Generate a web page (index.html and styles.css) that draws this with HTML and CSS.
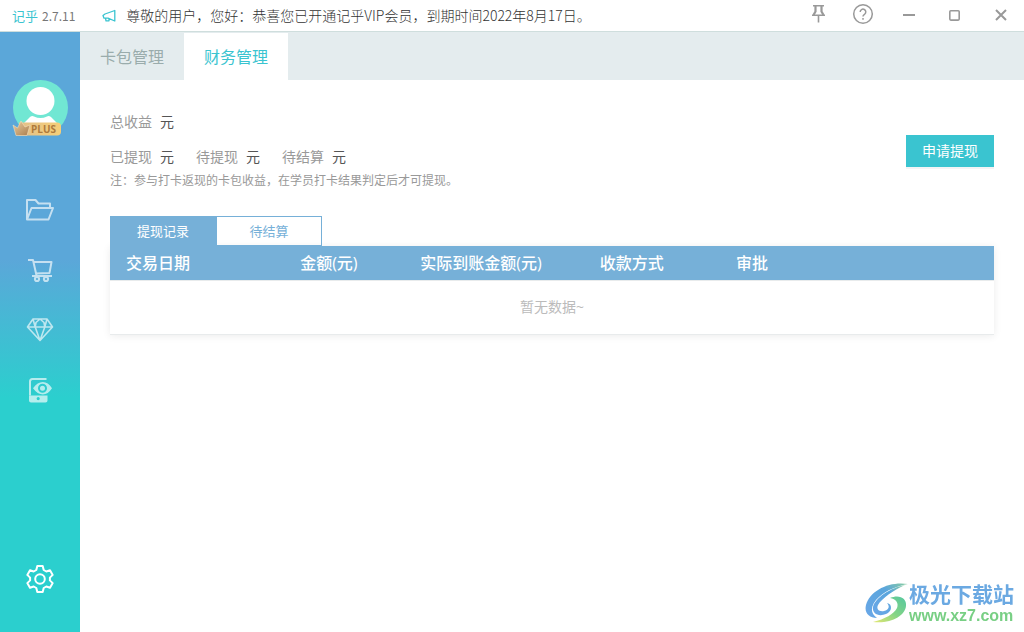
FILE: index.html
```html
<!DOCTYPE html>
<html lang="zh-CN">
<head>
<meta charset="utf-8">
<meta name="viewport" content="width=device-width, initial-scale=1">
<title>财务管理</title>
<link rel="stylesheet" href="styles.css">
</head>
<body>
<header class="titlebar">
  <span class="brand">记乎</span>
  <span class="version">2.7.11</span>
  <svg class="horn" width="14" height="14" viewBox="0 0 14 14" fill="none" stroke="#3ac4d0" stroke-width="1.3" stroke-linejoin="round"><path d="M12.800 1.500v10.500L6 9.200H2L1 6.500l2-1.500zM3.500 9.200l.5 2.600h3V9.500"/></svg>
  <p class="notice">尊敬的用户，您好：恭喜您已开通记乎VIP会员，到期时间2022年8月17日。</p>
  <div class="window-controls">
    <button type="button" aria-label="置顶"><svg width="22" height="22" viewBox="0 0 22 22" fill="none" stroke="#999" stroke-width="1.6"><path d="M7 2.800h11M6 12.200h13M12.500 13v6.500"/><path stroke-width="2.200" d="M9.500 3v5.500L7.500 12M15.500 3v5.500l2 3.500"/></svg></button>
    <button type="button" aria-label="帮助"><svg width="22" height="22" viewBox="0 0 22 22" fill="none" stroke="#999" stroke-width="1.5"><circle cx="11" cy="11" r="9.300"/><path d="M8.200 9a2.800 2.800 0 1 1 4.300 2.300Q11 12.200 11 13.600M11 15v1.700"/></svg></button>
    <button type="button" aria-label="最小化"><svg width="22" height="22" viewBox="0 0 22 22" fill="none" stroke="#999" stroke-width="2"><path d="M5 12h12"/></svg></button>
    <button type="button" aria-label="最大化"><svg width="22" height="22" viewBox="0 0 22 22" fill="none" stroke="#999" stroke-width="1.600"><rect x="5.800" y="7.700" width="9.400" height="9.400" rx="1"/></svg></button>
    <button type="button" aria-label="关闭"><svg width="22" height="22" viewBox="0 0 22 22" fill="none" stroke="#999" stroke-width="2"><path d="M6 7l10 10M16 7L6 17"/></svg></button>
  </div>
</header>
<div class="shell">
  <aside class="sidebar">
    <svg class="avatar" width="56" height="57" viewBox="0 0 56 57">
      <defs>
        <clipPath id="face"><circle cx="28.500" cy="27.500" r="27.500"/></clipPath>
        <linearGradient id="gold"><stop offset="0" stop-color="#e3c08a"/><stop offset="1" stop-color="#f6cf78"/></linearGradient>
        <linearGradient id="crown" x2="1" y2="1"><stop offset="0" stop-color="#edd0a2"/><stop offset="1" stop-color="#a97c4c"/></linearGradient>
      </defs>
      <g clip-path="url(#face)"><path fill="#71e7d3" d="M0 0h57v57H0z"/><path fill="#fff" d="M9 46l9-9q2-1.500 4-.5 6.500 3 13 0 2-1 4 .5l9 9v11H9z"/></g>
      <circle cx="28.500" cy="21" r="14" fill="#fff"/>
      <path fill="url(#gold)" d="M7 42.500h38q4 0 4 4v5q0 4-4 4H7z"/>
      <path fill="url(#crown)" stroke="#f3dfbd" stroke-width=".6" d="M4 55.500L1 45l4.500 3 3.500-7 4 6 5-2-3 10.500z"/>
      <text class="plus" x="19" y="53">PLUS</text>
    </svg>
    <nav class="nav">
      <a href="#" aria-label="文件"><svg width="30" height="30" viewBox="0 0 30 30"><path d="M2 24.500V5h8.500l3 3.500H25V13M2 24.500L6.500 13H28l-4.500 11.500z"/></svg></a>
      <a href="#" aria-label="购物车"><svg width="30" height="30" viewBox="0 0 30 30"><path d="M3 5h5l3.500 15.500M8.500 7H26.500l-2 11-14 .5M7 21h20"/><circle cx="12" cy="24" r="2.100"/><circle cx="21" cy="24" r="2.100"/></svg></a>
      <a href="#" aria-label="会员"><svg class="thin" width="30" height="30" viewBox="0 0 30 30"><path d="M8 4h14l5.500 8L15 25.500 2.500 12zM2.500 12h25M8 4l2.200 8L15 25.500 19.800 12 22 4M10.200 12L11 7.500 15 4l4 3.500.8 4.500"/></svg></a>
      <a href="#" aria-label="预览"><svg width="30" height="30" viewBox="0 0 30 30"><path d="M21.500 4H7.500Q5 4 5 6.500V20.500"/><path class="solid" d="M4 20.500h18.500v5q0 2-2 2H6q-2 0-2-2zM13.200 22a1.600 1.600 0 1 0 0 3.200 1.600 1.600 0 0 0 0-3.200z"/><path class="solid" d="M8 13.200q4.500-6.200 9.800-6.200t9.200 6.200q-4 6.200-9.200 6.200T8 13.200zM17.500 8.700a4.500 4.500 0 1 0 0 9 4.500 4.500 0 0 0 0-9zM17.500 10.700a2.500 2.500 0 1 1 0 5 2.500 2.500 0 0 1 0-5z"/></svg></a>
    </nav>
    <a class="settings" href="#" aria-label="设置"><svg width="30" height="30" viewBox="0 0 30 30"><path d="M12.300 2h5.400l1 4 2.600 1.500L25 6.300l2.700 4.600-2.800 2.700v2.800l2.800 2.700-2.700 4.600-3.700-1.200-2.600 1.500-1 4h-5.400l-1-4-2.600-1.500L5 23.700l-2.700-4.600 2.800-2.700v-2.800l-2.800-2.700L5 6.300l3.700 1.200L11.300 6z"/><circle cx="15" cy="15" r="4.800"/></svg></a>
  </aside>
  <main class="main">
    <nav class="tabs">
      <a class="tab" href="#">卡包管理</a>
      <a class="tab active" href="#" aria-current="page">财务管理</a>
    </nav>
    <section class="content">
      <div class="summary">
        <div class="figures">
          <p class="row"><span class="figure">总收益<b>元</b></span></p>
          <p class="row"><span class="figure">已提现<b>元</b></span><span class="figure">待提现<b>元</b></span><span class="figure">待结算<b>元</b></span></p>
          <p class="note">注：参与打卡返现的卡包收益，在学员打卡结果判定后才可提现。</p>
        </div>
        <button class="apply" type="button">申请提现</button>
      </div>
      <div class="switch">
        <button class="selected" type="button">提现记录</button>
        <button type="button">待结算</button>
      </div>
      <table class="records">
        <colgroup><col class="date"><col class="amount"><col class="received"><col class="method"><col></colgroup>
        <thead><tr><th>交易日期</th><th>金额(元)</th><th>实际到账金额(元)</th><th>收款方式</th><th>审批</th></tr></thead>
        <tbody><tr><td colspan="5">暂无数据~</td></tr></tbody>
      </table>
    </section>
  </main>
</div>
<div class="watermark">
  <svg width="44" height="42" viewBox="0 0 44 42">
    <defs>
      <linearGradient id="sky" x1="1" y1="0" x2="0" y2="1"><stop offset="0" stop-color="#8bcf9f"/><stop offset=".35" stop-color="#5aa5dc"/><stop offset="1" stop-color="#6aa7e8"/></linearGradient>
      <linearGradient id="leaf" x1="1" y1="0" x2="0" y2="1"><stop offset="0" stop-color="#55c7a0"/><stop offset=".5" stop-color="#83d486"/><stop offset="1" stop-color="#e5e873"/></linearGradient>
    </defs>
    <path fill="url(#sky)" d="M43 2C25-1 5 8 1 23c-2 8 3 13 11 13-8-5-6-14 2-21C22 8 32 4 43 2z"/>
    <path fill="url(#sky)" d="M40 3C29 8 17 16 13 23c-2 4 1 7 6 6 5-1 6-5 3-8 6 1 5 9-1 11-7 3-14 0-13-7C10 16 25 6 40 3z"/>
    <path fill="url(#leaf)" d="M25 16c9-4 17 0 16 8C40 34 26 42 8 40c12-3 21-8 24-14 2-5-1-9-7-10z"/>
  </svg>
  <div class="site"><strong>极光下载站</strong><span>www.xz7.com</span></div>
</div>
</body>
</html>
```
FILE: styles.css
```css
* { box-sizing: border-box; }
body {
  margin: 0;
  min-height: 100vh;
  display: flex;
  flex-direction: column;
  background: #fff;
  color: #555;
  font: 14px/20px "Open Sans", "Noto Sans CJK SC", sans-serif;
}
p { margin: 0; }
a { text-decoration: none; }
button { font: inherit; border: 0; padding: 0; background: none; cursor: pointer; }
svg { display: block; flex: none; }

.titlebar {
  display: flex;
  align-items: center;
  height: 32px;
  padding: 0 12px;
  border-bottom: 1px solid #cfdedd;
}
.brand { color: #3ac4d0; font-size: 13px; }
.version { margin-left: 4px; font: 12px/20px "Noto Sans CJK SC", sans-serif; color: #777; }
.horn { margin-left: 27px; }
.notice { margin-left: 10px; padding-bottom: 2px; font-family: "Noto Sans CJK SC", sans-serif; font-weight: 300; color: #333; white-space: nowrap; }
.window-controls { display: flex; gap: 24px; margin-left: auto; padding-bottom: 4px; }

.shell { flex: 1; display: flex; }
.sidebar {
  flex: none;
  width: 80px;
  display: flex;
  flex-direction: column;
  align-items: center;
  padding: 48px 0 38px;
  background: linear-gradient(#5ba7d9 38%, #2bcfce 61%);
}
.plus { font: 700 10px "Open Sans", sans-serif; fill: #ae7a3c; }
.nav { margin-top: 43px; }
.nav a { display: flex; align-items: center; height: 60px; opacity: .65; }
.nav svg, .settings svg { fill: none; stroke: #fff; stroke-width: 2; stroke-linejoin: round; }
.nav .thin { stroke-width: 1.6; }
.nav .solid { fill: #fff; fill-rule: evenodd; stroke: none; }
.settings { margin-top: auto; }

.main { flex: 1; min-width: 0; }
.tabs { display: flex; height: 48px; background: #e4ecee; }
.tab { padding: 0 20px; color: #9aacac; font-size: 16px; line-height: 50px; }
.tab.active { margin-top: 1px; line-height: 48px; background: #fff; color: #3ac4d0; }

.content { padding: 30px; }
.summary { display: flex; align-items: center; justify-content: space-between; }
.row { display: flex; gap: 22px; margin-bottom: 11px; line-height: 24px; color: #999; }
.row + .row { margin-bottom: 0; }
.figure b { margin-left: 8px; font-weight: 400; color: #555; }
.note { font-size: 12px; line-height: 24px; color: #999; }
.apply {
  width: 88px;
  height: 32px;
  margin-bottom: 2px;
  background: #3ac4d0;
  color: #fff;
  box-shadow: 0 2px 0 #f3f4f5;
}

.switch { display: flex; margin-top: 23px; }
.switch button {
  width: 106px;
  height: 30px;
  border: 1px solid #76b0d8;
  color: #76b0d8;
  font-size: 13px;
}
.switch .selected { background: #76b0d8; color: #fff; }

.records {
  width: 100%;
  table-layout: fixed;
  border-collapse: collapse;
  box-shadow: 0 1px 8px rgba(0, 0, 0, .08);
}
.date { width: 19.7%; }
.amount { width: 13.6%; }
.received { width: 20.3%; }
.method { width: 15.4%; }
.records th {
  height: 34px;
  padding: 0 16px;
  background: #76b0d8;
  color: #fff;
  font-size: 16px;
  font-weight: 500;
  text-align: left;
  white-space: nowrap;
}
.records td {
  height: 54px;
  padding: 0;
  border: 1px solid #e8ebec;
  border-width: 1px 0;
  color: #bbb;
  text-align: center;
}

.watermark { position: fixed; right: 10px; bottom: 7px; display: flex; align-items: center; }
.site { display: flex; flex-direction: column; }
.site strong { color: #6ba9e2; font-size: 21px; line-height: 26px; }
.site span { color: #78cf84; font: 700 16px/18px "Liberation Sans", sans-serif; }
```
